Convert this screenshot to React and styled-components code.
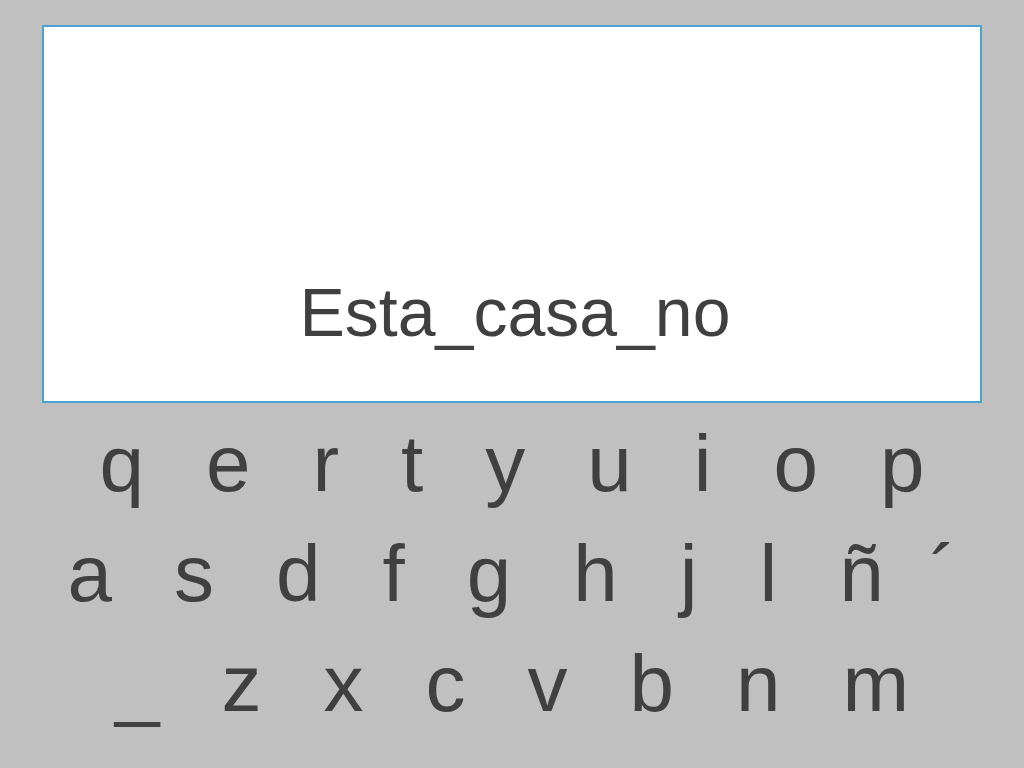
import React from "react";
import styled, { createGlobalStyle } from "styled-components";

const Global = createGlobalStyle`
  html, body {
    margin: 0;
    padding: 0;
    background: #c0c0c0;
  }
  body {
    font-family: "Liberation Sans", Arial, Helvetica, sans-serif;
    color: #404040;
  }
`;

const Page = styled.div`
  width: 1024px;
  height: 768px;
  box-sizing: border-box;
  padding-top: 25px;
  display: flex;
  flex-direction: column;
  align-items: center;
  overflow: hidden;
`;

const Display = styled.div`
  box-sizing: border-box;
  width: 940px;
  height: 378px;
  background: #ffffff;
  border: 2px solid #4aa4d4;
  display: flex;
  flex-direction: column;
  justify-content: flex-end;
  align-items: center;
  padding-bottom: 55px;
`;

const Typed = styled.div`
  font-size: 68px;
  line-height: 1;
  color: #404040;
  white-space: pre;
  padding-left: 6px;
`;

const Keyboard = styled.div`
  margin-top: 6px;
  display: flex;
  flex-direction: column;
`;

const KeyRow = styled.div`
  display: flex;
  justify-content: center;
  gap: 62px;
  height: 110px;
  line-height: 110px;
`;

const Key = styled.span`
  font-size: 80px;
  color: #404040;
  cursor: pointer;
  user-select: none;
  margin-left: ${(p) => (p.$accent ? "-16px" : "0")};
`;

const rows = [
  ["q", "e", "r", "t", "y", "u", "i", "o", "p"],
  ["a", "s", "d", "f", "g", "h", "j", "l", "ñ", "´"],
  ["_", "z", "x", "c", "v", "b", "n", "m"],
];

export default function App() {
  return (
    <>
      <Global />
      <Page>
        <Display>
          <Typed>Esta_casa_no</Typed>
        </Display>
        <Keyboard>
          {rows.map((row, i) => (
            <KeyRow key={i}>
              {row.map((k) => (
                <Key key={k} $accent={k === "´"}>
                  {k}
                </Key>
              ))}
            </KeyRow>
          ))}
        </Keyboard>
      </Page>
    </>
  );
}
